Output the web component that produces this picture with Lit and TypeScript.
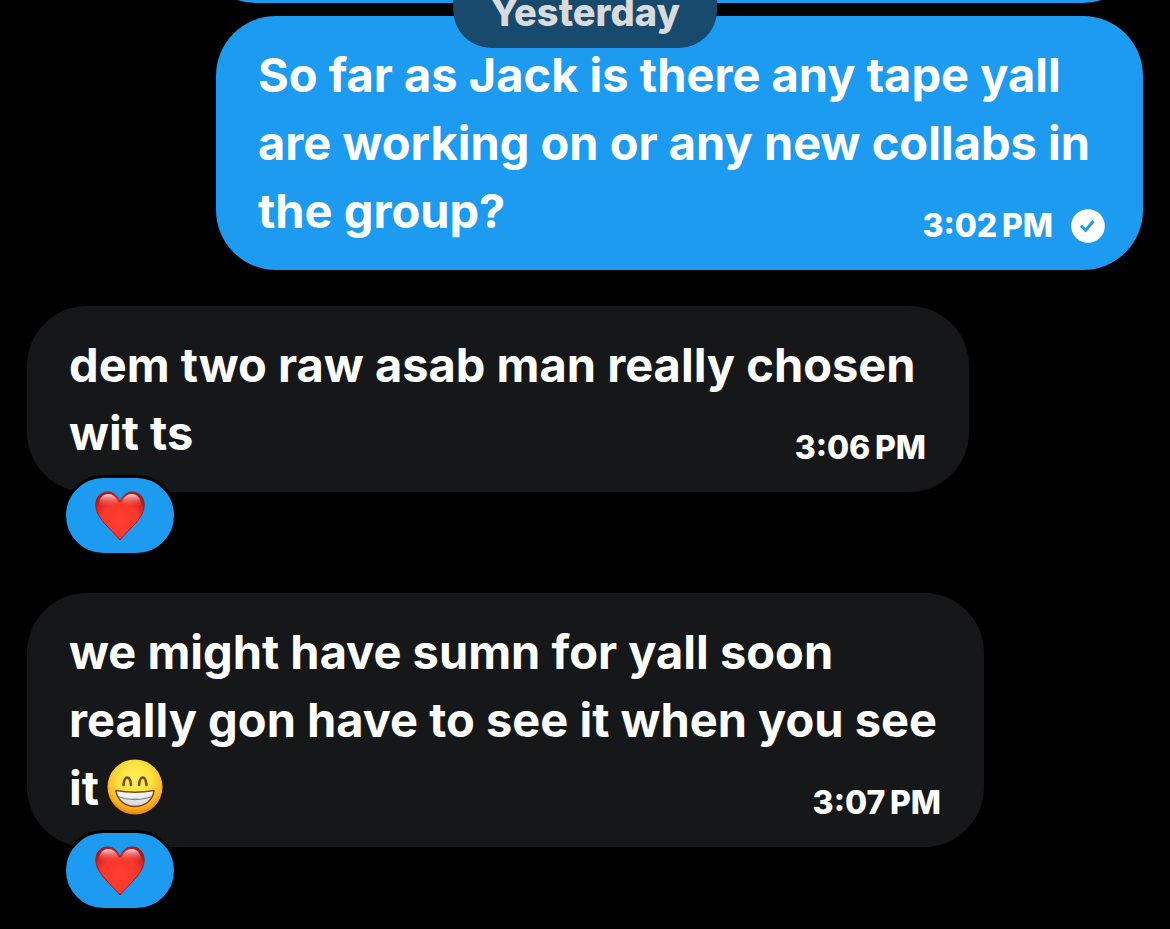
import { LitElement, html, css, nothing } from "lit";
import { customElement, property } from "lit/decorators.js";

const heart = html`<svg class="heart" viewBox="0 0 50 50" role="img" aria-label="Red heart">
  <defs>
    <radialGradient id="heart-fill" cx="50%" cy="60%" r="62%">
      <stop offset="0" stop-color="#ff3d30" />
      <stop offset="0.6" stop-color="#f9382e" />
      <stop offset="0.85" stop-color="#dd2523" />
      <stop offset="1" stop-color="#b5161a" />
    </radialGradient>
    <linearGradient id="heart-shine" x1="0" y1="0" x2="0" y2="1">
      <stop offset="0" stop-color="#fff" stop-opacity="0.85" />
      <stop offset="1" stop-color="#ff6a5c" stop-opacity="0" />
    </linearGradient>
  </defs>
  <path fill="url(#heart-fill)" stroke="#9f1a20" stroke-width="1"
    d="M25 11C22 4 18 1 13 1C5.500 1 0.800 6.500 0.800 14C0.800 27 15 37 25 49C35 37 49.200 27 49.200 14C49.200 6.500 44.500 1 37 1C32 1 28 4 25 11Z" />
  <path fill="url(#heart-shine)"
    d="M4 14C4 7 8 3 13 3C18 3 21 6 23 11C20 14 7 17 4 14ZM27 11C29 6 32 3 37 3C42 3 46 7 46 14C43 17 30 14 27 11Z" />
</svg>`;

const grin = html`<svg class="emoji" viewBox="0 0 56 56" role="img" aria-label="Beaming face with smiling eyes">
  <defs>
    <radialGradient id="face-fill" cx="50%" cy="36%" r="64%">
      <stop offset="0" stop-color="#fff35a" />
      <stop offset="0.45" stop-color="#ffe240" />
      <stop offset="0.78" stop-color="#fdb92a" />
      <stop offset="1" stop-color="#e8820f" />
    </radialGradient>
    <linearGradient id="teeth-fill" x1="0" y1="0" x2="0" y2="1">
      <stop offset="0" stop-color="#fff" />
      <stop offset="1" stop-color="#d3d3da" />
    </linearGradient>
  </defs>
  <circle cx="28" cy="28" r="27.500" fill="url(#face-fill)" />
  <g fill="none" stroke="#7a4a08" stroke-width="2.600" stroke-linecap="round">
    <path d="M16.500 26C17.500 16 23 16 24 26" />
    <path d="M32 26C33 16 38.500 16 39.500 26" />
  </g>
  <path fill="url(#teeth-fill)" stroke="#7a4a08" stroke-width="1.600" stroke-linejoin="round"
    d="M9 31.500C20 33.500 36 33.500 47 31.500C46 41.500 37.500 47.500 28 47.500C18.500 47.500 10 41.500 9 31.500Z" />
  <path fill="none" stroke="#7d7e88" stroke-width="1.300" d="M11 37.500C21 41.500 35 41.500 45 37.500" />
</svg>`;

const sentTick = html`<svg class="tick" viewBox="0 0 34 34" role="img" aria-label="Sent">
  <circle cx="17" cy="17" r="16.800" fill="#fff" />
  <path d="M10 16.800L14.600 21.300L22.500 12" fill="none" stroke="#1d9bf0" stroke-width="3" />
</svg>`;

@customElement("chat-message")
class ChatMessage extends LitElement {
  @property({ type: Boolean, reflect: true }) outgoing = false;
  @property({ type: Boolean, reflect: true }) wide = false;
  @property({ type: Boolean }) liked = false;
  @property() time = "";

  static styles = css`
    :host {
      display: flex;
      flex-direction: column;
      align-items: flex-start;
    }
    :host([outgoing]) {
      align-items: flex-end;
    }
    .bubble {
      box-sizing: border-box;
      display: grid;
      width: min(942px, 100%);
      padding: 25px 43px 25px 42px;
      border-radius: 60px;
      background: #151719;
    }
    :host([wide]) .bubble {
      width: min(957px, 100%);
    }
    :host([outgoing]) .bubble {
      width: min(927px, 100%);
      padding-right: 38px;
      background: #1d9bf0;
    }
    .text,
    .meta {
      grid-area: 1 / 1;
    }
    .text {
      margin: 0;
      font-size: 47px;
      font-weight: 740;
      line-height: 68px;
    }
    .meta {
      display: flex;
      align-items: center;
      gap: 18px;
      justify-self: end;
      align-self: end;
      font-size: 32px;
      line-height: 38px;
    }
    .tick {
      display: block;
      width: 34px;
      height: 34px;
    }
    .reaction {
      display: flex;
      justify-content: center;
      align-items: center;
      box-sizing: content-box;
      width: 108px;
      height: 75px;
      margin: -17px 0 1px 36px;
      padding: 0;
      border: 3px solid #000;
      border-radius: 41px;
      background: #1d9bf0;
      cursor: pointer;
    }
    .heart {
      width: 50px;
      height: 50px;
    }
  `;

  render() {
    return html`<div class="bubble">
        <p class="text"><slot></slot></p>
        <div class="meta"><time>${this.time}</time>${this.outgoing ? sentTick : nothing}</div>
      </div>
      ${this.liked ? html`<button class="reaction" type="button">${heart}</button>` : nothing}`;
  }
}

@customElement("app-root")
class AppRoot extends LitElement {
  static styles = css`
    :host {
      display: block;
      box-sizing: border-box;
      min-height: 100vh;
      overflow: hidden;
      background: #000;
      color: #fff;
      font-family: Inter, "Liberation Sans", sans-serif;
      font-weight: 800;
    }
    .day {
      position: absolute;
      top: 0;
      left: 50%;
      transform: translateX(-50%);
      z-index: 1;
      box-sizing: border-box;
      height: 48px;
      display: flex;
      align-items: flex-end;
      padding: 0 37px 13px;
      border-radius: 0 0 38px 38px;
      background: #184a6d;
      color: #d9dadb;
      font-size: 38px;
      line-height: 46px;
    }
    .thread {
      display: flex;
      flex-direction: column;
      padding: 0 27px 20px;
    }
    .previous {
      align-self: flex-end;
      width: min(947px, 100%);
      height: 120px;
      margin: -117px 0 13px;
      border-radius: 60px;
      background: #1d9bf0;
    }
    .messages {
      display: flex;
      flex-direction: column;
      gap: 36px;
    }
    .emoji {
      width: 56px;
      height: 56px;
      margin-left: 8px;
      vertical-align: -10px;
    }
  `;

  render() {
    return html`<div class="day">Yesterday</div>
      <main class="thread">
        <div class="previous"></div>
        <div class="messages">
          <chat-message outgoing time=${"3:02\u2009PM"}
            >So far as Jack is there any tape yall are working on or any new collabs in the group?</chat-message
          >
          <chat-message liked time=${"3:06\u2009PM"}>dem two raw asab man really chosen wit ts</chat-message>
          <chat-message liked wide time=${"3:07\u2009PM"}
            >we might have sumn for yall soon really gon have to see it when you see it${grin}</chat-message
          >
        </div>
      </main>`;
  }
}
